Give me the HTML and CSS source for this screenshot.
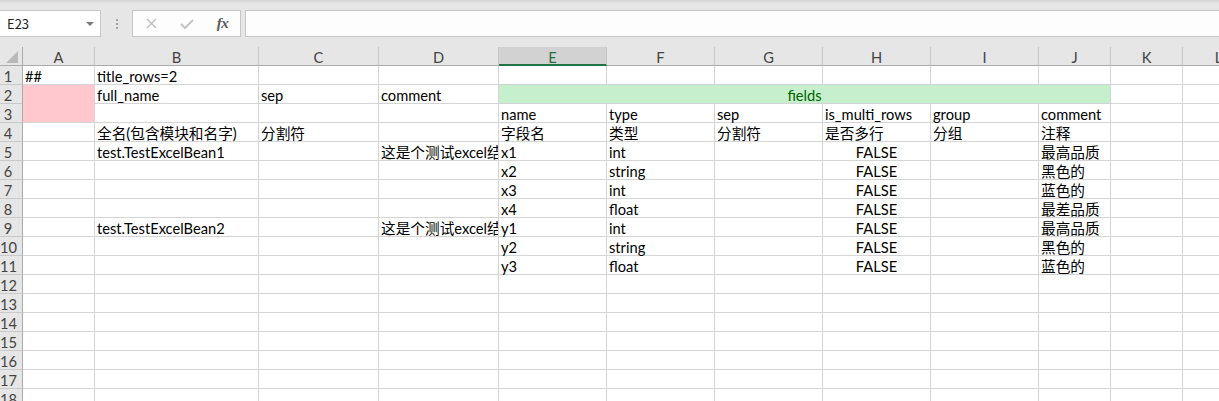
FILE: index.html
```html
<!DOCTYPE html>
<html lang="zh">
<head>
<meta charset="utf-8">
<title>Sheet</title>
<link rel="stylesheet" href="styles.css">
</head>
<body>
<div class="toolbar">
  <div class="namebox"><span class="name">E23</span><span class="caret"></span></div>
  <div class="grip"><i></i><i></i><i></i></div>
  <div class="fbtns">
    <span class="fb"><svg width="11" height="11" viewBox="0 0 11 11"><path d="M1 1 L10 10 M10 1 L1 10" stroke="#bdbdbd" stroke-width="1.4" fill="none"/></svg></span>
    <span class="fb"><svg width="14" height="10" viewBox="0 0 14 10"><path d="M1 5 L5 9 L13 1" stroke="#c4c4c4" stroke-width="2" fill="none"/></svg></span>
    <span class="fb fx">fx</span>
  </div>
  <div class="finput"></div>
</div>
<div class="sheet">
  <div class="corner"><span class="tri"></span></div>
  <div class="h">A</div><div class="h">B</div><div class="h">C</div><div class="h">D</div><div class="h sel">E</div><div class="h">F</div><div class="h">G</div><div class="h">H</div><div class="h">I</div><div class="h">J</div><div class="h">K</div><div class="h">L</div>

  <div class="r">1</div>
  <div class="c">##</div><div class="c">title_rows=2</div><div class="c"></div><div class="c"></div><div class="c"></div><div class="c"></div><div class="c"></div><div class="c"></div><div class="c"></div><div class="c"></div><div class="c"></div><div class="c"></div>

  <div class="r">2</div>
  <div class="c pink"></div><div class="c">full_name</div><div class="c">sep</div><div class="c">comment</div><div class="c green">fields</div><div class="c"></div><div class="c"></div>

  <div class="r">3</div>
  <div class="c"></div><div class="c"></div><div class="c"></div><div class="c">name</div><div class="c">type</div><div class="c">sep</div><div class="c">is_multi_rows</div><div class="c">group</div><div class="c">comment</div><div class="c"></div><div class="c"></div>

  <div class="r">4</div>
  <div class="c"></div><div class="c">全名(包含模块和名字)</div><div class="c">分割符</div><div class="c"></div><div class="c">字段名</div><div class="c">类型</div><div class="c">分割符</div><div class="c">是否多行</div><div class="c">分组</div><div class="c">注释</div><div class="c"></div><div class="c"></div>

  <div class="r">5</div>
  <div class="c"></div><div class="c">test.TestExcelBean1</div><div class="c"></div><div class="c clip">这是个测试excel结构</div><div class="c">x1</div><div class="c">int</div><div class="c"></div><div class="c ctr">FALSE</div><div class="c"></div><div class="c">最高品质</div><div class="c"></div><div class="c"></div>

  <div class="r">6</div>
  <div class="c"></div><div class="c"></div><div class="c"></div><div class="c"></div><div class="c">x2</div><div class="c">string</div><div class="c"></div><div class="c ctr">FALSE</div><div class="c"></div><div class="c">黑色的</div><div class="c"></div><div class="c"></div>

  <div class="r">7</div>
  <div class="c"></div><div class="c"></div><div class="c"></div><div class="c"></div><div class="c">x3</div><div class="c">int</div><div class="c"></div><div class="c ctr">FALSE</div><div class="c"></div><div class="c">蓝色的</div><div class="c"></div><div class="c"></div>

  <div class="r">8</div>
  <div class="c"></div><div class="c"></div><div class="c"></div><div class="c"></div><div class="c">x4</div><div class="c">float</div><div class="c"></div><div class="c ctr">FALSE</div><div class="c"></div><div class="c">最差品质</div><div class="c"></div><div class="c"></div>

  <div class="r">9</div>
  <div class="c"></div><div class="c">test.TestExcelBean2</div><div class="c"></div><div class="c clip">这是个测试excel结构</div><div class="c">y1</div><div class="c">int</div><div class="c"></div><div class="c ctr">FALSE</div><div class="c"></div><div class="c">最高品质</div><div class="c"></div><div class="c"></div>

  <div class="r">10</div>
  <div class="c"></div><div class="c"></div><div class="c"></div><div class="c"></div><div class="c">y2</div><div class="c">string</div><div class="c"></div><div class="c ctr">FALSE</div><div class="c"></div><div class="c">黑色的</div><div class="c"></div><div class="c"></div>

  <div class="r">11</div>
  <div class="c"></div><div class="c"></div><div class="c"></div><div class="c"></div><div class="c">y3</div><div class="c">float</div><div class="c"></div><div class="c ctr">FALSE</div><div class="c"></div><div class="c">蓝色的</div><div class="c"></div><div class="c"></div>

  <div class="r">12</div>
  <div class="c"></div><div class="c"></div><div class="c"></div><div class="c"></div><div class="c"></div><div class="c"></div><div class="c"></div><div class="c"></div><div class="c"></div><div class="c"></div><div class="c"></div><div class="c"></div>
  <div class="r">13</div>
  <div class="c"></div><div class="c"></div><div class="c"></div><div class="c"></div><div class="c"></div><div class="c"></div><div class="c"></div><div class="c"></div><div class="c"></div><div class="c"></div><div class="c"></div><div class="c"></div>
  <div class="r">14</div>
  <div class="c"></div><div class="c"></div><div class="c"></div><div class="c"></div><div class="c"></div><div class="c"></div><div class="c"></div><div class="c"></div><div class="c"></div><div class="c"></div><div class="c"></div><div class="c"></div>
  <div class="r">15</div>
  <div class="c"></div><div class="c"></div><div class="c"></div><div class="c"></div><div class="c"></div><div class="c"></div><div class="c"></div><div class="c"></div><div class="c"></div><div class="c"></div><div class="c"></div><div class="c"></div>
  <div class="r">16</div>
  <div class="c"></div><div class="c"></div><div class="c"></div><div class="c"></div><div class="c"></div><div class="c"></div><div class="c"></div><div class="c"></div><div class="c"></div><div class="c"></div><div class="c"></div><div class="c"></div>
  <div class="r">17</div>
  <div class="c"></div><div class="c"></div><div class="c"></div><div class="c"></div><div class="c"></div><div class="c"></div><div class="c"></div><div class="c"></div><div class="c"></div><div class="c"></div><div class="c"></div><div class="c"></div>
  <div class="r">18</div>
  <div class="c"></div><div class="c"></div><div class="c"></div><div class="c"></div><div class="c"></div><div class="c"></div><div class="c"></div><div class="c"></div><div class="c"></div><div class="c"></div><div class="c"></div><div class="c"></div>
</div>
</body>
</html>
```
FILE: styles.css
```css
html, body {
  margin: 0;
  padding: 0;
}
body {
  width: 1219px;
  height: 401px;
  overflow: hidden;
  background: #ffffff;
  font-family: Lato, "Noto Sans CJK SC", sans-serif;
}

/* ---------- formula bar ---------- */
.toolbar {
  height: 47px;
  box-sizing: border-box;
  padding-top: 10px;
  display: flex;
  align-items: flex-start;
  background: linear-gradient(#d4d4d4, #e6e6e6 4px, #e6e6e6);
  width: 1219px;
}
.namebox {
  margin-left: -1px;
  width: 102px;
  height: 27px;
  box-sizing: border-box;
  border: 1px solid #c6c6c6;
  background: #ffffff;
  display: flex;
  align-items: center;
  justify-content: space-between;
  padding: 0 6px 0 7px;
  font-family: "Noto Sans CJK SC", sans-serif;
  font-size: 13px;
  color: #222222;
}
.caret {
  width: 0;
  height: 0;
  border-left: 4px solid transparent;
  border-right: 4px solid transparent;
  border-top: 4px solid #7a7a7a;
}
.grip {
  width: 31px;
  height: 27px;
  display: flex;
  flex-direction: column;
  align-items: center;
  justify-content: center;
  gap: 2px;
}
.grip i {
  display: block;
  width: 2px;
  height: 2px;
  background: #a3a3a3;
}
.fbtns {
  width: 109px;
  height: 27px;
  box-sizing: border-box;
  border: 1px solid #c6c6c6;
  background: #fdfdfd;
  display: grid;
  grid-template-columns: 36px 36px 35px;
  align-items: center;
  justify-items: center;
}
.fb {
  display: flex;
  align-items: center;
  justify-content: center;
}
.fx {
  font-family: "Liberation Serif", serif;
  font-style: italic;
  font-weight: bold;
  font-size: 15px;
  color: #5a5a5a;
  letter-spacing: -0.5px;
}
.finput {
  flex: 1;
  margin-left: 4px;
  margin-right: -1px;
  height: 27px;
  box-sizing: border-box;
  border: 1px solid #c6c6c6;
  background: #fdfdfd;
}

/* ---------- sheet grid ---------- */
.sheet {
  display: grid;
  grid-template-columns: 23px 72px 164px 120px 120px repeat(5, 108px) 72px 72px 72px;
  grid-auto-rows: 19px;
  font-size: 14.67px;
  width: 1255px;
}
.sheet > div {
  box-sizing: border-box;
  white-space: nowrap;
  min-width: 0;
}
.corner {
  background: #e6e6e6;
  border-right: 1px solid #ababab;
  border-bottom: 1px solid #ababab;
  display: flex;
  align-items: flex-end;
  justify-content: flex-end;
  padding: 0 4px 2px 0;
}
.tri {
  display: block;
  width: 12px;
  height: 12px;
  background: #b9b9b9;
  clip-path: polygon(100% 0, 100% 100%, 0 100%);
}
.h {
  background: #e6e6e6;
  border-right: 1px solid #c6c6c6;
  border-bottom: 1px solid #ababab;
  text-align: center;
  padding-top: 4px;
  line-height: 14px;
  color: #444444;
}
.h.sel {
  background: #d2d2d2;
  color: #217346;
  border-bottom: 2px solid #217346;
  line-height: 13px;
}
.r {
  background: #e6e6e6;
  border-right: 1px solid #ababab;
  border-bottom: 1px solid #c9c9c9;
  color: #444444;
  padding-top: 3px;
  line-height: 15px;
  padding-right: 6px;
  text-align: center;
}
.c {
  border-right: 1px solid #d4d4d4;
  border-bottom: 1px solid #d4d4d4;
  padding: 3px 2px 0 2px;
  line-height: 15px;
  color: #000000;
}
.clip {
  overflow-x: clip;
}
.ctr {
  text-align: center;
}
.pink {
  grid-row: span 2;
  background: #ffc7ce;
}
.green {
  grid-column: span 6;
  background: #c6efce;
  color: #006100;
  text-align: center;
}
```
